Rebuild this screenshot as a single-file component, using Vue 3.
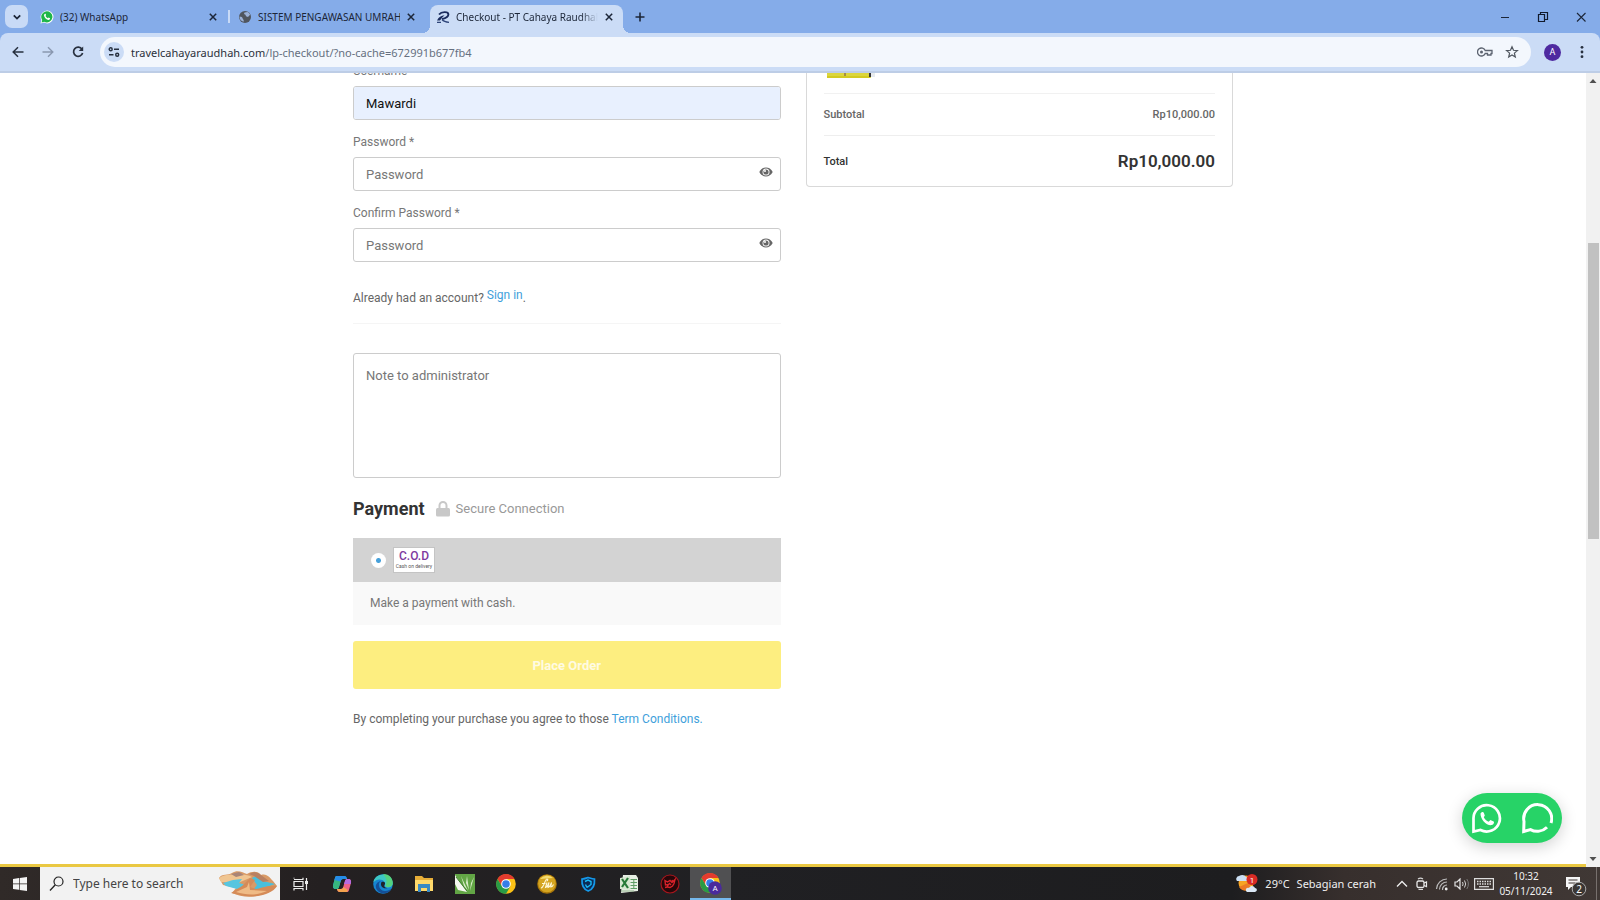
<script setup>
import { ref } from 'vue'

const tabs = [
  { title: '(32) WhatsApp', icon: 'whatsapp', active: false },
  { title: 'SISTEM PENGAWASAN UMRAH', icon: 'globe', active: false },
  { title: 'Checkout - PT Cahaya Raudhah', icon: 'travel', active: true }
]

const username = ref('Mawardi')
const password = ref('')
const confirmPassword = ref('')
const note = ref('')
const method = ref('cod')
const path = ref('/lp-checkout/?no-cache=672991b677fb4')
const query = ref('')
</script>

<template>
  <div class="desktop">
    <header class="browser">
      <div class="strip">
        <button class="tab-search" aria-label="Search tabs">
          <svg width="10" height="10" viewBox="0 0 10 10"><path d="M1.8 3.4 5 6.6 8.2 3.4" fill="none" stroke="#1c2638" stroke-width="1.8" /></svg>
        </button>
        <div class="tabs">
          <div v-for="tab in tabs" :key="tab.title" class="tab" :class="{ active: tab.active }">
            <svg v-if="tab.icon === 'whatsapp'" width="14" height="14" viewBox="0 0 14 14">
              <path d="M.5 13.5 1.4 10A6.4 6.4 0 1 1 4 12.6Z" fill="#fff" />
              <path d="M1.6 12.4 2.2 10A5.6 5.6 0 1 1 4.2 11.8Z" fill="#1fb64a" />
              <path d="M4.3 4.2c.5-.8 1.2-.7 1.4-.1l.4 1-.6.9c.5 1 1.2 1.7 2.3 2.2l.8-.8 1.5.8c.1 1.2-1 1.9-2 1.7C6 9.4 4.2 7.400 4 5.600Z" fill="#fff" />
            </svg>
            <svg v-else-if="tab.icon === 'globe'" width="14" height="14" viewBox="0 0 14 14">
              <circle cx="7" cy="7" r="6" fill="#50565f" />
              <path d="M1.500 6.500c2 .2 3 .8 3.200 2 .1.800 1 .9 1 2v1.200C3 11.300 1.400 9 1.500 6.500ZM6.500 2.500l3-.6c1.300.6 2.200 1.600 2.600 2.900L10 7 8 6.200 7.500 4.700 6 4Z" fill="#9cb2d8" />
            </svg>
            <svg v-else width="14" height="14" viewBox="0 0 14 14">
              <path d="M3 4.500C5.500 1.500 12.300 1.200 12.400 4.500 12.400 7 9 8.300 6 9.200" fill="none" stroke="#1b2c5e" stroke-width="1.900" />
              <path d="M1 10.500c1.500-3.500 4.200-4.800 7.500-5.300C6.800 6.800 5.200 8.500 4 10.500Z" fill="#1b2c5e" />
              <path d="M1 12.300h4M6 9.500q2 2.500 7 2.800" fill="none" stroke="#2f4579" stroke-width="1.300" />
            </svg>
            <button class="tab-title">{{ tab.title }}</button>
            <button class="tab-close" :aria-label="'Close ' + tab.title">
              <svg width="12" height="12" viewBox="0 0 12 12"><path d="m2.800 2.800 6.400 6.400M9.200 2.800 2.800 9.200" stroke="#1c2638" stroke-width="1.500" /></svg>
            </button>
          </div>
        </div>
        <button class="new-tab" aria-label="New tab">
          <svg width="12" height="12" viewBox="0 0 12 12"><path d="M6 1.500v9M1.500 6h9" stroke="#1c2638" stroke-width="1.600" /></svg>
        </button>
        <div class="window-controls">
          <button aria-label="Minimize"><svg width="12" height="12" viewBox="0 0 12 12"><path d="M2 6.500h8" stroke="#1c2638" /></svg></button>
          <button aria-label="Restore"><svg width="12" height="12" viewBox="0 0 12 12"><path d="M1.500 3.500h6v7h-6ZM3.500 3.500v-2h7v7h-3" fill="none" stroke="#111a2b" stroke-width="1.200" /></svg></button>
          <button aria-label="Close window"><svg width="12" height="12" viewBox="0 0 12 12"><path d="m2 2 8.500 8.500M10.500 2 2 10.500" stroke="#1c2638" stroke-width="1.100" /></svg></button>
        </div>
      </div>

      <div class="toolbar">
        <button class="nav" aria-label="Back"><svg width="14" height="14" viewBox="0 0 14 14"><path d="M12.500 7H2.500M7 2.200 2.200 7 7 11.800" fill="none" stroke="#27303f" stroke-width="1.500" /></svg></button>
        <button class="nav" aria-label="Forward"><svg width="14" height="14" viewBox="0 0 14 14"><path d="M1.500 7h10M7 2.200 11.800 7 7 11.800" fill="none" stroke="#8a98b0" stroke-width="1.400" /></svg></button>
        <button class="nav" aria-label="Reload"><svg width="14" height="14" viewBox="0 0 14 14"><path d="M11 4.200A4.600 4.600 0 1 0 11.600 8" fill="none" stroke="#27303f" stroke-width="1.700" /><path d="M12.200 1.500V6H7.700Z" fill="#27303f" /></svg></button>
        <div class="omnibox">
          <button class="site-info" aria-label="Site information">
            <svg width="12" height="12" viewBox="0 0 12 12"><g fill="none" stroke="#27303f" stroke-width="1.400"><circle cx="2.700" cy="3.300" r="1.500" /><path d="M6 3.300h5M1 8.800h4.500" /><circle cx="9.200" cy="8.800" r="1.500" /></g></svg>
          </button>
          <label class="host" for="address">travelcahayaraudhah.com</label>
          <input id="address" v-model="path" class="address" type="text" spellcheck="false" />
          <button class="tool" aria-label="Passwords">
            <svg width="16" height="12" viewBox="0 0 16 12"><path d="M8.200 4.500A4 4 0 1 0 8.200 7.500H10.500V9H14V7.500H15V4.500Z" fill="none" stroke="#5c6370" stroke-width="1.300" /><circle cx="4.500" cy="6" r="1.500" fill="#5c6370" /></svg>
          </button>
          <button class="tool" aria-label="Bookmark this page">
            <svg width="14" height="14" viewBox="0 0 14 14"><path d="m7 1.700 1.500 3.600 3.900.3-3 2.500.9 3.900L7 9.900 3.700 12l.9-3.900-3-2.500 3.900-.3Z" fill="none" stroke="#50565f" stroke-width="1.200" /></svg>
          </button>
        </div>
        <button class="profile" aria-label="Profile">A</button>
        <button class="menu" aria-label="Menu">
          <svg width="4" height="14" viewBox="0 0 4 14" fill="#27303f"><circle cx="2" cy="2.300" r="1.400" /><circle cx="2" cy="7" r="1.400" /><circle cx="2" cy="11.700" r="1.400" /></svg>
        </button>
      </div>
    </header>

    <div class="viewport">
      <div class="page">
        <main class="checkout">
          <form class="details" @submit.prevent>
            <div class="field">
              <label for="username">Username *</label>
              <div class="box"><input id="username" v-model="username" class="filled" type="text" spellcheck="false" /></div>
            </div>
            <div class="field">
              <label for="password">Password *</label>
              <div class="box">
                <input id="password" v-model="password" type="password" placeholder="Password" />
                <button class="reveal" type="button" aria-label="Show password"><svg width="14" height="10" viewBox="0 0 14 10"><path d="M.3 5C3.200-.9 10.800-.9 13.700 5 10.800 10.900 3.200 10.900.3 5Z" fill="#666" /><circle cx="7" cy="5" r="3.500" fill="#fff" /><circle cx="7" cy="5" r="2.600" fill="#666" /><circle cx="6" cy="4" r="1" fill="#fff" /></svg></button>
              </div>
            </div>
            <div class="field">
              <label for="confirm">Confirm Password *</label>
              <div class="box">
                <input id="confirm" v-model="confirmPassword" type="password" placeholder="Password" />
                <button class="reveal" type="button" aria-label="Show confirmed password"><svg width="14" height="10" viewBox="0 0 14 10"><path d="M.3 5C3.200-.9 10.800-.9 13.700 5 10.800 10.900 3.200 10.900.3 5Z" fill="#666" /><circle cx="7" cy="5" r="3.500" fill="#fff" /><circle cx="7" cy="5" r="2.600" fill="#666" /><circle cx="6" cy="4" r="1" fill="#fff" /></svg></button>
              </div>
            </div>

            <p class="account">Already had an account? <a href="#signin">Sign in</a>.</p>

            <textarea v-model="note" class="note" aria-label="Note to administrator" placeholder="Note to administrator"></textarea>

            <div class="payment-head">
              <h2>Payment</h2>
              <span class="secure">
                <svg width="14" height="16" viewBox="0 0 14 16"><path d="M3.500 8V4.500a3.500 3.500 0 0 1 7 0V8" fill="none" stroke="#c8c8c8" stroke-width="2" /><rect y="7" width="14" height="8.500" rx="1.500" fill="#c8c8c8" /></svg>
                Secure Connection
              </span>
            </div>

            <div class="method">
              <label class="method-head" for="cod">
                <input id="cod" v-model="method" type="radio" name="method" value="cod" />
                <span class="cod"><b>C.O.D</b><small>Cash on delivery</small></span>
              </label>
              <p>Make a payment with cash.</p>
            </div>

            <button class="order" type="submit">Place Order</button>
            <p class="terms">By completing your purchase you agree to those <a href="#terms">Term Conditions.</a></p>
          </form>

          <aside class="summary">
            <div class="product">
              <svg width="50" height="8" viewBox="0 0 50 8"><path d="M1 0h44v7H1Z" fill="#dcd63c" /><path d="M1 5h43v2H1Z" fill="#d3ca22" /><path d="M18 0h2v5h-2Z" fill="#a58f45" /><path d="M43 0h2v6h-2Z" fill="#35343a" /><path d="M45 0h4v6h-4Z" fill="#e7ebee" /></svg>
            </div>
            <div class="row"><span>Subtotal</span><span>Rp10,000.00</span></div>
            <div class="row total"><span>Total</span><strong>Rp10,000.00</strong></div>
          </aside>
        </main>

        <button class="chat" aria-label="Chat on WhatsApp">
          <svg width="32" height="32" viewBox="0 0 32 32"><path d="M2.500 29.500V17A13.200 13.200 0 1 1 9.500 28Z" fill="none" stroke="#fff" stroke-width="2.700" /><path d="M9.500 11.500c.9-2 2.800-2 3.300-.8l1 2.800-1 1.800c1.100 2.200 2.700 3.600 4.900 4.500l1.700-1.800 3.300 1.500c.8.6.2 3.200-2 3.600-5.300.8-11.200-5.600-11.200-11.600Z" fill="#fff" /></svg>
          <svg width="32" height="32" viewBox="0 0 32 32"><path d="M30 21A14 14 0 1 0 3 19.500L2.700 29.500 9.500 27.600A14 14 0 0 0 26 25.200" fill="none" stroke="#fff" stroke-width="3" /></svg>
        </button>
      </div>

      <div class="scrollbar" aria-hidden="true">
        <svg width="14" height="16" viewBox="0 0 14 16"><path d="M3.500 10h7L7 6Z" fill="#505050" /></svg>
        <i class="above"></i><i class="thumb"></i><i class="below"></i>
        <svg width="14" height="16" viewBox="0 0 14 16"><path d="M3.500 6h7L7 10Z" fill="#505050" /></svg>
      </div>
    </div>

    <footer class="taskbar">
      <button class="start" aria-label="Start"><svg width="14" height="14" viewBox="0 0 14 14" fill="#f4f4f4"><path d="M0 2 6 1.100V6.500H0ZM6.700 1 14 0V6.500H6.700ZM0 7.200H6V12.700L0 11.900ZM6.700 7.200H14V14L6.700 12.900Z" /></svg></button>
      <label class="search">
        <svg width="16" height="16" viewBox="0 0 16 16"><circle cx="9.500" cy="5.500" r="4.500" fill="none" stroke="#222" stroke-width="1.200" /><path d="M6.300 8.800 1 14.500" stroke="#222" stroke-width="1.300" /></svg>
        <input v-model="query" type="text" aria-label="Type here to search" placeholder="Type here to search" />
        <svg width="60" height="28" viewBox="0 0 60 28">
          <path d="M1 8C4 3 10 6 14 3 20-1 25 3 29 4 34 1 40 1 43 5 49 3 52 8 55 11L59 16C54 20 50 24 42 25 34 28 22 27 14 23L18 18 5 15Z" fill="#d99a66" />
          <path d="M1 8C8 3 15 6 19 3 26 5 31 5 34 7L20 13 3 12Z" fill="#f0c591" />
          <path d="M5 13 15 10 24 9 21 13 28 15 19 19 8 16Z" fill="#57c5df" />
          <path d="M34 8 38 6 45 11 57 14 46 18 35 20 39 15Z" fill="#49bfdc" />
          <path d="M31 4C36 1 40 2 43 5L51 11 45 12 36 6Z" fill="#b98061" />
          <path d="M13 23 24 16 32 8 37 10 32 17 38 19C47 17 52 15 59 16 55 23 42 28 27 26Z" fill="#d58b58" />
          <path d="M18 22 29 17 31 12 32 20 49 21C38 26 28 25 18 22Z" fill="#efbb86" />
          <path d="M13 4 21 2 26 5 18 7Z" fill="#a98577" />
        </svg>
      </label>
      <nav class="apps" aria-label="Pinned apps">
        <button aria-label="Task view"><svg width="16" height="14" viewBox="0 0 16 14"><path d="M1 1.500V.7M1 2.500h9V.7M1 4.500h9v5H1ZM1 13.500v-2h9v2M13.500 1v12" fill="none" stroke="#eee" stroke-width="1.200" /><path d="M12 4h3v3h-3Z" fill="#eee" /></svg></button>
        <button aria-label="Copilot"><svg width="20" height="20" viewBox="0 0 20 20"><path d="M5 2h7c2 0 2.500 1 3 3H11C9.500 5 9 6 8.500 8L7 13c-.5 1.500-1 2-3 2-3 0-3.500-2-2.700-5L3 4C3.400 2.600 4 2 5 2Z" fill="#2a9ee4" /><path d="M2 8 3 4c.4-1.400 1-2 2-2h5L7 13c-.5 1.500-1 2-3 2-2 0-3-1-3-3Z" fill="#37b67e" /><path d="M5 2h7c2 0 2.500 1 3 3H11C9.500 5 9 6 8.600 7.500L2.500 6 3 4c.4-1.400 1-2 2-2Z" fill="#258ce8" /><path d="M15 18H8c-2 0-2.500-1-3-3h4c1.500 0 2-1 2.500-3L13 7c.5-1.500 1-2 3-2 3 0 3.500 2 2.700 5L17 16c-.4 1.400-1 2-2 2Z" fill="#ed6287" /><path d="m12 10 1-3c.5-1.500 1-2 3-2 3 0 3.500 2 2.700 5Z" fill="#b66be1" /><path d="M5 15h4c1.500 0 2-1 2.300-2l4.700 3-1 2H8c-2 0-2.500-1-3-3Z" fill="#f5a34e" /></svg></button>
        <button aria-label="Edge"><svg width="20" height="20" viewBox="0 0 20 20"><circle cx="10" cy="10" r="9.800" fill="#1685d1" /><path d="M.4 8.500C1.500-2 19-2.500 19.700 9c0 4-3.200 5-6.200 4.200C10.500 12 13 10.500 11.500 8 9 4.500 3 5 .4 8.500Z" fill="#3ec7c4" /><path d="M10 0c7 0 10 5 9.700 9.500 0 3-4 4.500-7 3 .8-4.500 2.500-6-2.700-12.500Z" fill="#54d27f" /><path d="M8 7C4 9 6 17 12 17c3 0 5-1 6.500-2.500C16 20 8 21.500 4 16 1 12 4 7.500 8 7Z" fill="#144f98" /><path d="M8.500 8c3-1 4.500 1 3 3-1 1.500.5 3 3 3-4 1.500-8-2-6-6Z" fill="#20232b" /></svg></button>
        <button aria-label="File Explorer"><svg width="20" height="18" viewBox="0 0 20 18"><path d="M1 1h7l2 2h9v13H1Z" fill="#e8ae38" /><path d="M1 5h18v11H1Z" fill="#ffd96b" /><path d="M4 9h12v8h-3v-4H7v4H4Z" fill="#398ac4" /></svg></button>
        <button aria-label="CorelDRAW"><svg width="20" height="20" viewBox="0 0 20 20"><path d="M0 0h20v20H0Z" fill="#62a545" /><path d="M0 1 12 18 3 16 0 10Z" fill="#f5f7f0" /><path d="M6 2 13 17 9 12ZM12 2l2 14-3-7ZM19 3l-4 14 1-8Z" fill="#d9ecc9" /><path d="M1 3 12 17" stroke="#3e7f2e" stroke-width="1" /></svg></button>
        <button aria-label="Chrome"><svg width="20" height="20" viewBox="0 0 20 20"><circle cx="10" cy="10" r="9.800" fill="#fbc116" /><path d="M1.500 5A9.800 9.800 0 0 1 18.500 5H10L6 12.500Z" fill="#e33b2e" /><path d="M1.500 5A9.800 9.800 0 0 0 10 19.800L14.300 12.500H6Z" fill="#299b46" /><circle cx="10" cy="10" r="4.800" fill="#fff" /><circle cx="10" cy="10" r="3.800" fill="#367ee8" /></svg></button>
        <button aria-label="Gold app"><svg width="20" height="20" viewBox="0 0 20 20"><circle cx="10" cy="10" r="9.800" fill="#a87509" /><circle cx="10" cy="9.500" r="8.800" fill="#d5a520" /><path d="M3 5a9 9 0 0 1 13-1Z" fill="#f4dc71" /><path d="M4 14c3 0 4-9 6-9 1.500 0 .5 2-.5 2M5 9.500h3.500M10 8.500 8.500 13.500q2-.5 3.500-5l-1 5q2-.5 3.500-5l-.7 4.500q1.500 0 2.700-2.500" fill="none" stroke="#fff8d8" stroke-width="1.100" /></svg></button>
        <button aria-label="Shield app"><svg width="18" height="18" viewBox="0 0 18 18"><path d="M3 4c3 0 4-1 6-1.500C11 3 13 4 15.500 4c.5 7-2 10.500-6.300 12C5 14.500 2.500 11 3 4Z" fill="#0b2c56" stroke="#1599ea" stroke-width="1.700" /><path d="M6 6.500 9 5l3 1.500v3L8 12.500M6.500 9.500 8 12.500" fill="none" stroke="#19b9f5" stroke-width="1.400" /></svg></button>
        <button aria-label="Excel"><svg width="20" height="20" viewBox="0 0 20 20"><path d="M4 1h13l2 3v13l-17 2Z" fill="#e7efe4" /><path d="M1 4 11 2v14L1 15Z" fill="#d6e7cf" /><path d="m3 5 6 9M9 4l-6 9" stroke="#277a37" stroke-width="2.200" /><path d="M11.500 5.500H18M11.500 8.500H18M11.500 11.500H18M11.500 14.500H18M14.800 5v10" stroke="#5f9c66" stroke-width="1" /><path d="M2 17h13" stroke="#91b28c" /></svg></button>
        <button aria-label="Red app"><svg width="20" height="20" viewBox="0 0 20 20"><circle cx="10" cy="10" r="9" fill="#27070a" stroke="#a8151c" stroke-width="1.200" /><path d="M5 6.500 7.500 8 10 6.500 12 8.500 15 5.500 14 9.500 12.500 12 10 13.500 7 13 8.500 10.500 5.500 11ZM9 9l2 2M5 13.500l2-.5M12 6l1 2" fill="none" stroke="#d8222a" stroke-width="1.400" /></svg></button>
        <button class="current" aria-label="Chrome, Checkout window"><svg width="22" height="22" viewBox="0 0 22 22"><circle cx="10" cy="10" r="9.800" fill="#fbc116" /><path d="M1.500 5A9.800 9.800 0 0 1 18.500 5H10L6 12.500Z" fill="#e33b2e" /><path d="M1.500 5A9.800 9.800 0 0 0 10 19.800L14.300 12.500H6Z" fill="#299b46" /><circle cx="10" cy="10" r="4.800" fill="#fff" /><circle cx="10" cy="10" r="3.800" fill="#367ee8" /><circle cx="15" cy="15" r="6.800" fill="#4a2a9c" /><text x="15" y="18" text-anchor="middle" font-family="Roboto, sans-serif" font-size="8" fill="#fff">A</text></svg></button>
      </nav>

      <div class="tray">
        <button class="weather">
          <svg width="22" height="20" viewBox="0 0 22 20"><circle cx="10" cy="9" r="7.500" fill="#f6a423" /><path d="M3 13a7.500 7.500 0 0 0 12 1L12 9Z" fill="#eb7a25" /><path d="M1 7a3 3 0 0 1 2-5c3-2 6-1 7 1 3 0 3 4 1 4Z" fill="#cbdff4" /><path d="M10 17c-1-3 2-4 3-3 2-3 5-2 6 0 2 0 3 3 0 4h-8Z" fill="#dbe8f5" /><circle cx="16" cy="5.500" r="5.500" fill="#d92b25" /><text x="16" y="8.500" text-anchor="middle" font-family="Roboto, sans-serif" font-size="8" fill="#fff">1</text></svg>
          <span>29°C</span><span>Sebagian cerah</span>
        </button>
        <button aria-label="Show hidden icons"><svg width="12" height="8" viewBox="0 0 12 8"><path d="m1 6.500 5-5 5 5" fill="none" stroke="#eee" stroke-width="1.300" /></svg></button>
        <button aria-label="Meet now"><svg width="12" height="14" viewBox="0 0 12 14"><path d="M2 2Q4.500.3 7 2M2.500 12.500H7" fill="none" stroke="#d8d8d8" stroke-width="1.200" /><rect x="1" y="4" width="7" height="6.500" rx="1.500" fill="none" stroke="#e8e8e8" stroke-width="1.300" /><path d="M8 6l2.500-1v4.500L8 8.500" fill="none" stroke="#e8e8e8" stroke-width="1.200" /></svg></button>
        <button aria-label="Network"><svg width="14" height="14" viewBox="0 0 14 14"><path d="M1.500 12A10.500 10.500 0 0 1 12 2M4.500 12.500A7.500 7.500 0 0 1 12 5M7.500 13A4.500 4.500 0 0 1 12 8" fill="none" stroke="#bbb" stroke-width="1.200" /><circle cx="11.200" cy="12" r="1.400" fill="#eee" /></svg></button>
        <button aria-label="Volume"><svg width="16" height="12" viewBox="0 0 16 12"><path d="M1 4h2l3-3v10L3 8H1Z" fill="none" stroke="#e4e4e4" stroke-width="1.200" /><path d="M8.500 4q1.200 2 0 4M10.500 2.500q2.400 3.500 0 7" fill="none" stroke="#d0d0d0" /><path d="M12.800 1q3.200 5 0 10" fill="none" stroke="#777" /></svg></button>
        <button class="keyboard" aria-label="Touch keyboard"><svg width="20" height="12" viewBox="0 0 20 12"><path d="M.6.6h18.800v10.800H.6Z" fill="none" stroke="#ddd" stroke-width="1.200" /><path d="M3 3.500h14M3 6h14" stroke="#ddd" stroke-width="1.400" stroke-dasharray="1.500 1" /><path d="M5 8.700h10" stroke="#ddd" stroke-width="1.200" /></svg></button>
        <button class="clock"><span>10:32</span><span>05/11/2024</span></button>
        <button class="notice" aria-label="2 notifications"><svg width="22" height="22" viewBox="0 0 22 22"><path d="M1 2h14v10H6l-3 3v-3H1Z" fill="#f6f6f6" /><path d="M3.500 5h9M3.500 8h7" stroke="#3a3331" stroke-width="1.200" /><circle cx="14" cy="14" r="6.800" fill="#3a3634" stroke="#aaa" /><text x="14" y="17.500" text-anchor="middle" font-family="Noto Sans, sans-serif" font-size="10" fill="#fff">2</text></svg></button>
        <button class="show-desktop" aria-label="Show desktop"></button>
      </div>
    </footer>
  </div>
</template>

<style>
body { margin: 0; }
</style>

<style scoped>
* { box-sizing: border-box; }
button { display: flex; align-items: center; justify-content: center; padding: 0; border: 0; background: none; color: inherit; font: inherit; flex-shrink: 0; }
input, textarea { margin: 0; padding: 0; border: 0; border-radius: 0; background: none; font: inherit; outline: 0; min-width: 0; }
svg { display: block; flex-shrink: 0; }
p, h2 { margin: 0; }
.desktop { display: flex; flex-direction: column; height: 100vh; overflow: hidden; background: #fff; font-family: "Noto Sans", sans-serif; font-size: 12px; }

.browser { flex-shrink: 0; background: #85ace9; }
.strip { display: flex; align-items: flex-end; height: 33px; padding-left: 5px; }
.tab-search { width: 23px; height: 23px; margin: 0 6px 5px 0; border-radius: 7px; background: #c8daf6; }
.tabs { display: flex; gap: 5px; min-width: 0; }
.tab { position: relative; display: flex; align-items: center; width: 193px; height: 28px; padding: 0 8px 4px 6px; color: #1c2638; font-size: 10px; }
.tab:first-child::after { content: ""; position: absolute; right: -3px; top: 5px; width: 2px; height: 13px; background: #c8daf6; }
.tab.active { border-radius: 8px 8px 0 0; background: #cbdcf6; }
.tab.active::before, .tab.active::after { content: ""; position: absolute; bottom: 0; width: 8px; height: 8px; }
.tab.active::before { left: -8px; background: radial-gradient(circle at 0 0, transparent 8px, #cbdcf6 8px); }
.tab.active::after { right: -8px; background: radial-gradient(circle at 100% 0, transparent 8px, #cbdcf6 8px); }
.tab-title { display: block; flex: 1 1 0; min-width: 0; margin: 0 5px 0 6px; overflow: hidden; text-align: left; white-space: nowrap; }
.tab.active .tab-title { mask-image: linear-gradient(to right, #000 88%, transparent); }
.new-tab { width: 24px; height: 24px; margin: 0 0 4px 5px; }
.window-controls { display: flex; margin-left: auto; height: 33px; }
.window-controls button { width: 38px; }

.toolbar { display: flex; align-items: center; height: 40px; padding: 0 0 0 3px; border-bottom: 2px solid #bdcde6; border-radius: 8px 8px 0 0; background: #cbdcf6; }
.nav { width: 30px; height: 30px; }
.omnibox { display: flex; align-items: center; flex: 1; min-width: 0; height: 30px; margin-left: 7px; padding: 0 6px 0 4px; border-radius: 15px; background: #f3f7fd; font-size: 11px; }
.site-info { width: 20px; height: 20px; margin-right: 7px; border-radius: 50%; background: #cbdcf6; }
.host { color: #2b303a; }
.address { flex: 1; color: #667080; }
.tool { width: 27px; height: 24px; }
.profile { width: 17px; height: 17px; margin-left: 13px; border-radius: 50%; background: #4e2aa0; color: #fff; font-family: Roboto, sans-serif; font-size: 9px; }
.menu { width: 20px; height: 24px; margin: 0 8px 0 11px; }

.viewport { display: flex; flex: 1; min-height: 0; }
.page { position: relative; flex: 1; min-width: 0; overflow: hidden; border-bottom: 3px solid #eac842; font-family: Roboto, sans-serif; color: #666; }
.checkout { display: grid; grid-template-columns: 1fr 1fr; align-items: start; gap: 25px; max-width: 880px; margin: -12px auto 0; }
.field label { display: block; height: 20px; margin-bottom: 5px; line-height: 20px; color: #777; }
.box { display: flex; align-items: center; height: 34px; margin-bottom: 12px; border: 1px solid #ccc; border-radius: 3px; overflow: hidden; font-size: 13px; }
.box input { flex: 1; height: 100%; padding: 0 12px; color: #111; }
.box .filled { background: #e8f0fe; }
input::placeholder, textarea::placeholder { color: #777; opacity: 1; }
.reveal { width: 28px; height: 28px; padding-bottom: 4px; }
.account { height: 50px; padding-top: 14px; border-bottom: 1px solid #f5f5f5; line-height: 20px; }
a { color: #3f9fdb; text-decoration: none; }
.account a { vertical-align: 3px; line-height: 12px; }
.note { display: block; width: 100%; height: 125px; margin-top: 29px; padding: 12px; border: 1px solid #ccc; border-radius: 3px; resize: none; font-size: 13px; line-height: 20px; }
.payment-head { display: flex; align-items: center; gap: 11px; height: 24px; margin: 19px 0 17px; }
h2 { color: #333; font-size: 18px; font-weight: 700; line-height: 24px; }
.secure { display: flex; align-items: center; gap: 6px; color: #999; font-size: 13px; line-height: 24px; }
.method-head { display: flex; align-items: center; gap: 7px; height: 44px; padding-left: 18px; background: #d3d3d3; }
.method-head input { appearance: none; width: 15px; height: 15px; border-radius: 50%; background: radial-gradient(circle, #46a0da 2px, #fff 3px); }
.cod { display: flex; flex-direction: column; align-items: center; width: 42px; height: 26px; padding-top: 2px; border: 1px solid #c4c4c4; background: #fff; }
.cod b { color: #7e3a9e; font-size: 12px; font-weight: 500; line-height: 13px; }
.cod small { color: #555; font-size: 5px; line-height: 7px; white-space: nowrap; }
.method p { height: 43px; padding-left: 17px; background: #f9f9f9; line-height: 43px; color: #777; }
.order { width: 100%; height: 48px; margin-top: 16px; border-radius: 3px; background: #fdee80; color: #fffbe3; font-size: 13px; font-weight: 700; }
.terms { margin-top: 20px; line-height: 20px; }

.summary { padding: 0 17px; border: 1px solid #d9d9d9; border-top: 0; border-radius: 0 0 4px 4px; font-size: 11px; font-weight: 500; }
.product { height: 33px; padding: 10px 0 0 2px; border-bottom: 1px solid #f1f1f1; }
.row { display: flex; align-items: center; justify-content: space-between; height: 42px; border-bottom: 1px solid #eee; }
.row.total { height: 50px; border: 0; color: #333; }
.total strong { font-size: 17px; font-weight: 600; }
.chat { position: absolute; right: 24px; bottom: 21px; gap: 18px; width: 100px; height: 50px; border-radius: 25px; background: #27d367; box-shadow: 0 4px 16px rgb(0 0 0 / 18%); }

.scrollbar { display: flex; flex-direction: column; flex-shrink: 0; width: 14px; background: #f1f1f1; }
.above { flex: 154 0 0; }
.thumb { flex: 297 0 0; margin: 0 1px 0 2px; background: #c1c1c1; }
.below { flex: 312 0 0; }

.taskbar { display: flex; flex-shrink: 0; height: 33px; background: linear-gradient(to right, #302a28, #242021 20%, #202023 45%, #1d1d1f 77%, #372f2d 84%, #403835); color: #f0f0f0; }
.start { width: 40px; }
.search { display: flex; align-items: center; width: 240px; padding: 0 2px 0 9px; background: #f2f2f2; }
.search input { flex: 1; margin-left: 8px; color: #333; }
.search input::placeholder { color: #444; }
.apps { display: flex; }
.apps button { width: 41px; }
.apps .current { border-bottom: 2px solid #76b9ed; padding-top: 2px; background: #505052; }
.tray { display: flex; margin-left: auto; }
.tray button { width: 20px; }
.tray .weather { width: auto; gap: 7px; margin-right: 16px; font-size: 11px; }
.tray .clock { flex-direction: column; width: 60px; font-size: 10px; line-height: 15px; }
.tray .keyboard { width: 24px; }
.tray .notice { width: 40px; padding-top: 4px; }
.tray .show-desktop { width: 4px; border-left: 1px solid #77706d; }
</style>
